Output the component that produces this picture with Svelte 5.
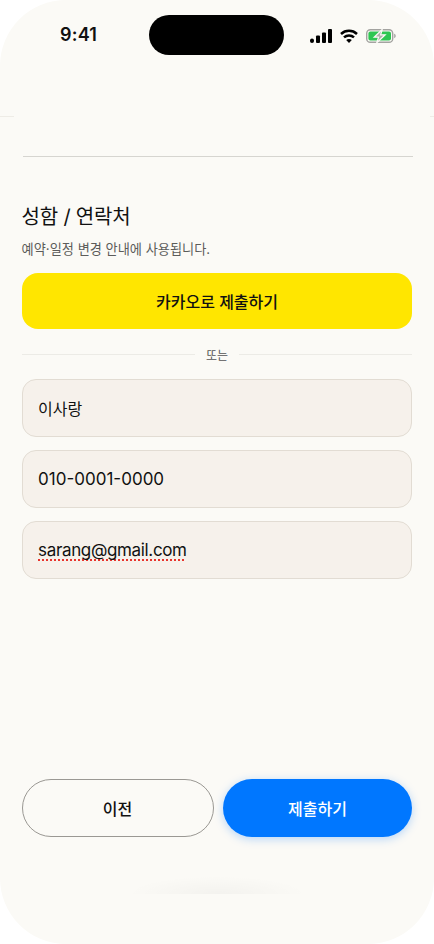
<script>
	const fields = [
		{ id: 'f-name', value: '이사랑' },
		{ id: 'f-phone', value: '010-0001-0000' },
		{ id: 'f-email', value: 'sarang@gmail.com' }
	];
</script>

<div class="phone">
	<header class="status">
		<span class="time">9:41</span>
		<div class="island"></div>
		<div class="indicators">
			<svg width="22" height="14" viewBox="0 0 22 14" fill="#000">
				<rect x="0" y="9.5" width="4" height="4.5" rx="2" />
				<rect x="6" y="6.5" width="4" height="7.5" rx="1" />
				<rect x="12" y="3.5" width="4" height="10.5" rx="1" />
				<rect x="18" y="0" width="4" height="14" rx="1" />
			</svg>
			<svg width="18" height="14" viewBox="0 0 18 14" fill="none" stroke="#000" stroke-width="2.5">
				<path d="M1 5C5.5 .8 12.5 .8 17 5" />
				<path d="M4 8.4C6.8 5.8 11.2 5.8 14 8.4" />
				<path d="M9 14 6.2 11.1C7.8 9.6 10.2 9.6 11.8 11.1Z" fill="#000" stroke="none" />
			</svg>
			<svg width="30" height="14" viewBox="0 0 30 14">
				<rect x=".7" y=".7" width="26" height="12.6" rx="3.6" fill="none" stroke="#a3a3a0" stroke-width="1.4" />
				<rect x="2.4" y="2.4" width="22.6" height="9.2" rx="2" fill="#2fc653" />
				<path d="M28.2 4.8c1 .3 1.5 1.2 1.5 2.2s-.5 1.9-1.5 2.2Z" fill="#a3a3a0" />
				<path d="M16.4 0.2 8.2 8.2h4.4l-2 5.8 8.6-8.2h-4.6Z" fill="#aeb0ab" stroke="#fbfaf6" stroke-width="1.2" />
			</svg>
		</div>
	</header>

	<div class="header-rule"><i></i><i class="end"></i></div>
	<div class="progress"></div>

	<main class="form">
		<h1>성함 / 연락처</h1>
		<p class="hint">예약·일정 변경 안내에 사용됩니다.</p>
		<button class="kakao">카카오로 제출하기</button>
		<div class="or"><span>또는</span></div>
		<div class="fields">
			{#each fields as f (f.id)}
				<div class="field {f.id}">
					<span>{f.value}</span>
				</div>
			{/each}
		</div>
	</main>

	<footer class="actions">
		<button class="prev">이전</button>
		<button class="submit">제출하기</button>
	</footer>

	<div class="home-shadow"></div>
</div>

<style>
	:global(body) {
		margin: 0;
		background: #fff;
	}

	.phone {
		width: 434px;
		height: 944px;
		display: flex;
		flex-direction: column;
		background: #fbfaf6;
		border-radius: 66px;
		overflow: hidden;
		font-family: Inter, "Noto Sans CJK KR", sans-serif;
		color: #111;
	}

	.status {
		height: 116px;
		flex: none;
		box-sizing: border-box;
		padding: 15px 38px 0 60px;
		display: flex;
		align-items: flex-start;
	}

	.time {
		width: 89px;
		margin-top: 7px;
		font-size: 18px;
		line-height: 26px;
		font-weight: 600;
		letter-spacing: 0.2px;
	}

	.island {
		width: 136px;
		height: 40px;
		border-radius: 20px;
		background: #000;
	}

	.indicators {
		margin: 13.5px 0 0 26px;
		display: flex;
		align-items: center;
		gap: 8px;
	}

	.indicators svg {
		display: block;
		flex: none;
	}

	.header-rule {
		height: 1px;
		flex: none;
		display: flex;
		justify-content: space-between;
	}

	.header-rule i {
		width: 14px;
		background: #eeece6;
	}

	.header-rule i.end {
		width: 4px;
	}

	.progress {
		flex: none;
		height: 1px;
		margin: 39px 21px 0 23px;
		background: #d6d5d0;
	}

	.form {
		flex: 1;
		padding: 46px 21.6px 0;
	}

	h1 {
		margin: 0;
		font-size: 20px;
		line-height: 28px;
		font-weight: 400;
		letter-spacing: -0.2px;
		color: #111;
	}

	.hint {
		margin: 9px 0 0;
		font-size: 13.2px;
		line-height: 18px;
		color: #5c5c5a;
	}

	.kakao {
		display: block;
		width: 100%;
		height: 56px;
		margin-top: 15px;
		border: none;
		border-radius: 16px;
		background: #ffe600;
		font: inherit;
		font-size: 16px;
		font-weight: 500;
		color: #111;
	}

	.or {
		display: flex;
		align-items: center;
		gap: 11px;
		height: 18px;
		margin-top: 16px;
		font-size: 12px;
		color: #555;
	}

	.or::before,
	.or::after {
		content: '';
		flex: 1;
		height: 1px;
		background: #ecebe6;
	}

	.fields {
		display: flex;
		flex-direction: column;
		gap: 13px;
		margin-top: 16px;
	}

	.field {
		height: 58px;
		box-sizing: border-box;
		display: flex;
		align-items: center;
		padding: 0 15.5px;
		border: 1px solid #e2dcd3;
		border-radius: 14px;
		background: #f6f1eb;
		font-size: 17px;
		font-weight: 400;
		color: #111;
	}

	.f-name {
		font-size: 16px;
	}

	.f-email span {
		letter-spacing: -0.35px;
		text-decoration: underline dotted #e8342c 2px;
		text-decoration-skip-ink: none;
		text-underline-offset: 3px;
	}

	.actions {
		flex: none;
		display: flex;
		gap: 9px;
		padding: 0 21.6px;
		margin-bottom: 39px;
	}

	.actions button {
		height: 58px;
		border-radius: 29px;
		font: inherit;
		font-size: 16px;
		font-weight: 500;
	}

	.prev {
		width: 192px;
		flex: none;
		box-sizing: border-box;
		border: 1.5px solid #9a9893;
		background: transparent;
		color: #111;
	}

	.submit {
		flex: 1;
		border: none;
		background: #0077ff;
		color: #fff;
		box-shadow: 0 2px 10px rgba(0, 119, 255, 0.28);
	}

	.home-shadow {
		flex: none;
		align-self: center;
		width: 180px;
		height: 18px;
		margin-bottom: 50px;
		background: radial-gradient(ellipse 50% 100% at 50% 100%, rgba(0, 0, 0, 0.03), rgba(0, 0, 0, 0));
	}
</style>
